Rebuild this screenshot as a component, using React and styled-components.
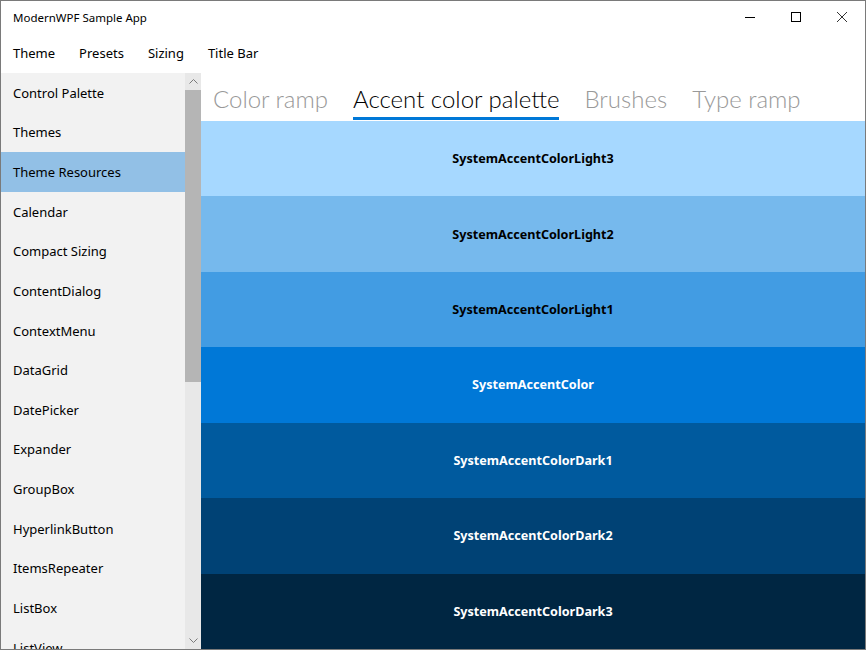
import React from "react";
import styled, { createGlobalStyle } from "styled-components";

const GlobalStyle = createGlobalStyle`
  html, body {
    margin: 0;
    padding: 0;
    background: #ffffff;
  }
  body {
    font-family: "Noto Sans", "Open Sans", sans-serif;
    color: #000;
  }
`;

const Window = styled.div`
  box-sizing: border-box;
  width: 866px;
  height: 650px;
  border: 1px solid #7a7a7a;
  display: flex;
  flex-direction: column;
  overflow: hidden;
  background: #fff;
`;

const TitleBar = styled.div`
  height: 31px;
  display: flex;
  align-items: center;
  justify-content: space-between;
  flex-shrink: 0;
`;

const Title = styled.div`
  font-size: 11.5px;
  padding-left: 12px;
  padding-top: 1px;
`;

const Caption = styled.div`
  display: flex;
  height: 100%;
`;

const CaptionButton = styled.div`
  width: 46px;
  height: 100%;
  display: flex;
  align-items: center;
  justify-content: center;
`;

const MenuBar = styled.div`
  height: 41px;
  display: flex;
  align-items: center;
  padding-left: 12px;
  padding-top: 1px;
  box-sizing: border-box;
  flex-shrink: 0;
`;

const MenuItem = styled.div`
  font-size: 13px;
  margin-right: ${(p) => p.$gap}px;
`;

const Body = styled.div`
  flex: 1;
  display: flex;
  min-height: 0;
`;

const Sidebar = styled.div`
  width: 200px;
  background: #f2f2f2;
  display: flex;
  flex-shrink: 0;
  overflow: hidden;
`;

const NavList = styled.div`
  flex: 1;
  display: flex;
  flex-direction: column;
`;

const NavItem = styled.div`
  height: 39.64px;
  flex-shrink: 0;
  display: flex;
  align-items: center;
  padding-left: 12px;
  font-size: 13px;
  background: ${(p) => (p.$selected ? "#92c0e6" : "transparent")};
`;

const ScrollBar = styled.div`
  width: 16px;
  background: #e8e8e8;
  display: flex;
  flex-direction: column;
  flex-shrink: 0;
`;

const ScrollArrow = styled.div`
  height: 17px;
  display: flex;
  align-items: center;
  justify-content: center;
  flex-shrink: 0;
`;

const ScrollTrack = styled.div`
  flex: 1;
  display: flex;
  flex-direction: column;
`;

const Thumb = styled.div`
  height: 292px;
  background: #b5b5b5;
`;

const Content = styled.div`
  flex: 1;
  display: flex;
  flex-direction: column;
  min-width: 0;
`;

const Tabs = styled.div`
  height: 48px;
  display: flex;
  align-items: flex-start;
  padding-left: 12px;
  flex-shrink: 0;
`;

const Tab = styled.div`
  font-family: "Lato", "Noto Sans", sans-serif;
  font-weight: 300;
  font-size: 24px;
  line-height: 28px;
  padding-top: 12px;
  margin-right: 25px;
  height: 32px;
  color: ${(p) => (p.$active ? "#000" : "#999999")};
  border-bottom: 3px solid ${(p) => (p.$active ? "#0078d7" : "transparent")};
`;

const Bands = styled.div`
  flex: 1;
  display: flex;
  flex-direction: column;
`;

const Band = styled.div`
  flex: 1;
  display: flex;
  align-items: center;
  justify-content: center;
  background: ${(p) => p.$bg};
  color: ${(p) => p.$fg};
  font-size: 12.6px;
  font-weight: 700;
`;

const navItems = [
  "Control Palette",
  "Themes",
  "Theme Resources",
  "Calendar",
  "Compact Sizing",
  "ContentDialog",
  "ContextMenu",
  "DataGrid",
  "DatePicker",
  "Expander",
  "GroupBox",
  "HyperlinkButton",
  "ItemsRepeater",
  "ListBox",
  "ListView",
];

const bands = [
  ["SystemAccentColorLight3", "#a6d8ff", "#000"],
  ["SystemAccentColorLight2", "#76b9ed", "#000"],
  ["SystemAccentColorLight1", "#429ce3", "#000"],
  ["SystemAccentColor", "#0078d7", "#fff"],
  ["SystemAccentColorDark1", "#005a9e", "#fff"],
  ["SystemAccentColorDark2", "#004275", "#fff"],
  ["SystemAccentColorDark3", "#002642", "#fff"],
];

export default function App() {
  return (
    <>
      <GlobalStyle />
      <Window>
        <TitleBar>
          <Title>ModernWPF Sample App</Title>
          <Caption>
            <CaptionButton>
              <svg width="10" height="10" viewBox="0 0 10 10">
                <path d="M0 5.5h10" stroke="#000" strokeWidth="1" />
              </svg>
            </CaptionButton>
            <CaptionButton>
              <svg width="10" height="10" viewBox="0 0 10 10">
                <rect x="0.5" y="0.5" width="9" height="9" fill="none" stroke="#000" />
              </svg>
            </CaptionButton>
            <CaptionButton>
              <svg width="10" height="10" viewBox="0 0 10 10">
                <path d="M0 0L10 10M10 0L0 10" stroke="#333" strokeWidth="1" />
              </svg>
            </CaptionButton>
          </Caption>
        </TitleBar>
        <MenuBar>
          <MenuItem $gap={24}>Theme</MenuItem>
          <MenuItem $gap={24}>Presets</MenuItem>
          <MenuItem $gap={24}>Sizing</MenuItem>
          <MenuItem $gap={0}>Title Bar</MenuItem>
        </MenuBar>
        <Body>
          <Sidebar>
            <NavList>
              {navItems.map((n) => (
                <NavItem key={n} $selected={n === "Theme Resources"}>
                  {n}
                </NavItem>
              ))}
            </NavList>
            <ScrollBar>
              <ScrollArrow>
                <svg width="9" height="5" viewBox="0 0 9 5">
                  <path d="M0.5 4.5L4.5 0.5L8.5 4.5" fill="none" stroke="#7a7a7a" />
                </svg>
              </ScrollArrow>
              <ScrollTrack>
                <Thumb />
              </ScrollTrack>
              <ScrollArrow>
                <svg width="9" height="5" viewBox="0 0 9 5">
                  <path d="M0.5 0.5L4.5 4.5L8.5 0.5" fill="none" stroke="#7a7a7a" />
                </svg>
              </ScrollArrow>
            </ScrollBar>
          </Sidebar>
          <Content>
            <Tabs>
              <Tab>Color ramp</Tab>
              <Tab $active>Accent color palette</Tab>
              <Tab>Brushes</Tab>
              <Tab>Type ramp</Tab>
            </Tabs>
            <Bands>
              {bands.map(([name, bg, fg]) => (
                <Band key={name} $bg={bg} $fg={fg}>
                  {name}
                </Band>
              ))}
            </Bands>
          </Content>
        </Body>
      </Window>
    </>
  );
}
